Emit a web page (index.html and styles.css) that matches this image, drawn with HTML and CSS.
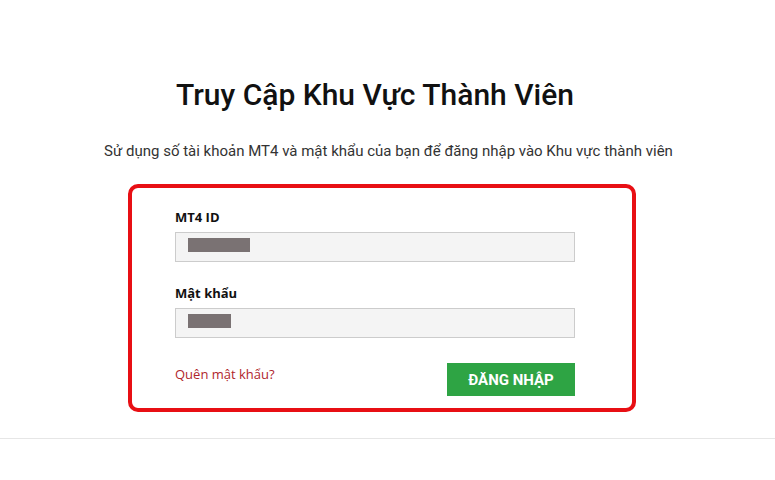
FILE: index.html
```html
<!DOCTYPE html>
<html>
<head>
    <title>Truy Cập Khu Vực Thành Viên</title>
    <link rel="stylesheet" href="styles.css">
</head>
<body>
    <div class="page">
        <h1 class="title">Truy Cập Khu Vực Thành Viên</h1>
        <p class="intro">Sử dụng số tài khoản MT4 và mật khẩu của bạn để đăng nhập vào Khu vực thành viên</p>

        <form class="login-box" id="loginForm">
            <label class="field-label">MT4 ID</label>
            <div class="field"><span class="mask mask-id"></span></div>

            <label class="field-label field-label-next">Mật khẩu</label>
            <div class="field"><span class="mask mask-pass"></span></div>

            <div class="actions">
                <a class="forgot" href="#">Quên mật khẩu?</a>
                <button class="submit" type="button">ĐĂNG NHẬP</button>
            </div>
        </form>

        <div class="divider"></div>
    </div>
</body>
</html>
```

FILE: styles.css
```css
body {
    margin: 0;
    background: #fff;
    font-family: Roboto, Arial, sans-serif;
    color: #222;
}

.page {
    padding-top: 77px;
}

.title {
    margin: 0 25px 0 0;
    font-size: 30px;
    line-height: 36px;
    font-weight: 500;
    text-align: center;
    color: #111;
}

.intro {
    margin: 28px 0 0 2px;
    font-size: 15px;
    line-height: 20px;
    text-align: center;
    color: #333;
}

.login-box {
    box-sizing: border-box;
    width: 508px;
    margin: 23px 0 0 128px;
    padding: 21px 57px 12px 43px;
    border: 4px solid #e80f14;
    border-radius: 10px;
    display: flex;
    flex-direction: column;
    font-family: "Open Sans", Arial, sans-serif;
}

.field-label {
    display: block;
    font-size: 13px;
    line-height: 16px;
    font-weight: 700;
    color: #111;
    margin-bottom: 7px;
}

.field-label-next {
    margin-top: 23px;
}

.field {
    box-sizing: border-box;
    height: 30px;
    padding: 5px 12px;
    background: #f4f4f4;
    border: 1px solid #ccc;
}

.mask {
    display: block;
    height: 14px;
    background: #7a7273;
}

.mask-id {
    width: 62px;
}

.mask-pass {
    width: 43px;
}

.actions {
    display: flex;
    justify-content: space-between;
    align-items: flex-start;
    margin-top: 25px;
}

.forgot {
    margin-top: 3px;
    font-size: 13px;
    line-height: 16px;
    color: #b0262c;
    text-decoration: none;
}

.submit {
    width: 128px;
    height: 33px;
    border: none;
    background: #2ea444;
    color: #fff;
    font-family: Roboto, Arial, sans-serif;
    font-size: 15px;
    font-weight: 700;
    cursor: pointer;
}

.divider {
    margin-top: 26px;
    height: 1px;
    background: #e6e6e6;
}
```
